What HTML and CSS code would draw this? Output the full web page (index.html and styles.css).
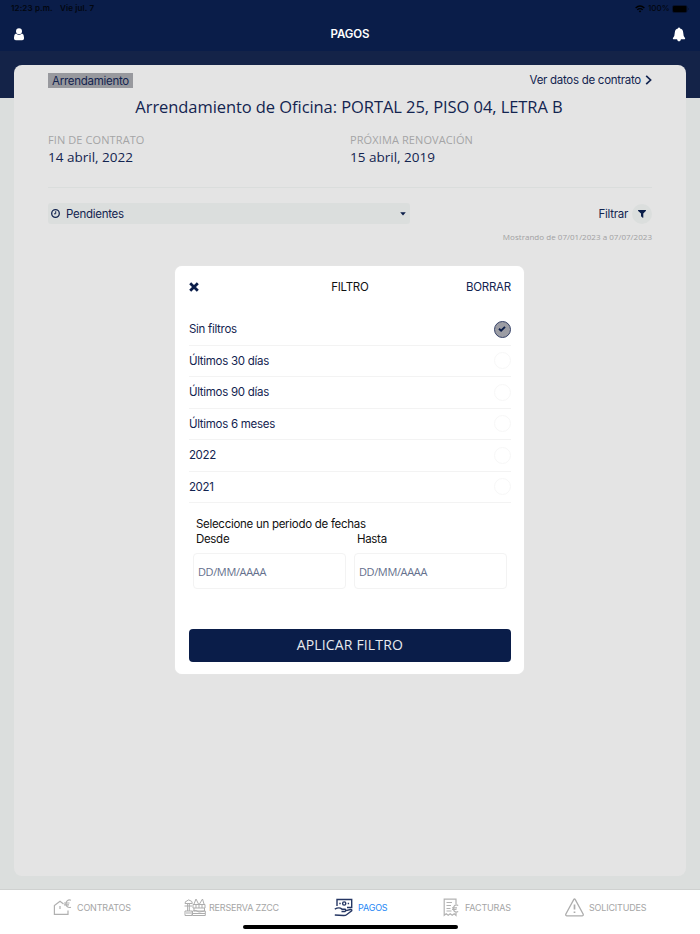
FILE: index.html
```html
<!DOCTYPE html>
<html lang="es">
<head>
    <meta charset="UTF-8">
    <meta name="viewport" content="width=device-width, initial-scale=1.0">
    <title>Pagos</title>
    <link rel="stylesheet" href="styles.css">
</head>
<body>
    <header>
        <div class="status">
            <span class="time">12:23 p.m.</span>
            <span class="date">Vie jul. 7</span>
            <svg class="wifi" width="10" height="8" viewBox="0 0 10 8" fill="none" stroke="#000" stroke-width="1.3">
                <path d="M.6 3Q5-1 9.400 3M2.300 4.800Q5 2.400 7.700 4.800"/>
                <path d="M3.700 6 5 7.500 6.300 6Q5 5 3.700 6Z" fill="#000" stroke="none"/>
            </svg>
            <span class="percent">100%</span>
            <svg width="17" height="8" viewBox="0 0 17 8">
                <rect x=".5" y=".5" width="14.500" height="7" rx="1.800" fill="none" stroke="#07122e"/>
                <rect x="1" y="1" width="13.500" height="6" rx="1"/>
                <path d="M16 3q1 1 0 2z"/>
            </svg>
        </div>
        <nav class="topbar">
            <svg width="10" height="13" viewBox="0 0 10 13" fill="#fff">
                <circle cx="5" cy="3.200" r="3"/>
                <path d="M2 5.600Q5 8.300 8 5.600 10 6.300 10 9.500V10.500Q10 12.200 8.200 12.200H1.800Q0 12.200 0 10.500V9.500Q0 6.300 2 5.600Z"/>
            </svg>
            <h1>PAGOS</h1>
            <svg width="14" height="15" viewBox="0 0 14 15" fill="#fff">
                <path d="M7 .5Q8 .5 8.100 1.500 11 2.200 11.200 5.500 11.300 9.500 13 11 13.500 11.700 12.700 12.200H1.300Q.5 11.700 1 11 2.700 9.500 2.800 5.500 3 2.200 5.900 1.500 6 .5 7 .5Z"/>
                <path d="M5 12H9Q8.700 14.400 7 14.400 5.300 14.400 5 12Z"/>
            </svg>
        </nav>
    </header>

    <main>
        <section class="card">
            <div class="card-top">
                <span class="tag">Arrendamiento</span>
                <a class="details" href="#">Ver datos de contrato
                    <svg width="7" height="10" viewBox="0 0 7 10" fill="none" stroke="#132450" stroke-width="1.700"><path d="M1.200 .8 5.600 5 1.200 9.200"/></svg>
                </a>
            </div>
            <h2>Arrendamiento de Oficina: PORTAL 25, PISO 04, LETRA B</h2>
            <div class="dates">
                <div>
                    <p class="label">FIN DE CONTRATO</p>
                    <p class="value">14 abril, 2022</p>
                </div>
                <div>
                    <p class="label">PRÓXIMA RENOVACIÓN</p>
                    <p class="value">15 abril, 2019</p>
                </div>
            </div>
            <div class="toolbar">
                <div class="select">
                    <svg width="9" height="9" viewBox="0 0 9 9" fill="none" stroke="#132450"><circle cx="4.500" cy="4.500" r="3.800" stroke-width="1.300"/><path d="M4.700 2.200V4.800H3"/></svg>
                    <span>Pendientes</span>
                    <svg class="caret" width="6" height="4" viewBox="0 0 6 4" fill="#0a1d49"><path d="M.2 .3H5.800L3 3.400Z"/></svg>
                </div>
                <span class="filter-text">Filtrar</span>
                <span class="filter-icon">
                    <svg width="8" height="8" viewBox="0 0 8 8" fill="#0a1d49"><path d="M.2 0H7.800Q8.200.5 7.800.9L5.300 3.600V7.600Q5.100 8 4.700 7.800L3 6.300V3.600L.2.900Q-.2.500.2 0Z"/></svg>
                </span>
            </div>
            <p class="showing">Mostrando de 07/01/2023 a 07/07/2023</p>
        </section>
    </main>

    <div class="modal">
        <div class="modal-header">
            <svg width="10" height="10" viewBox="0 0 10 10" stroke="#0a1d49" stroke-width="2.800"><path d="M1.200 1.200 8.800 8.800M8.800 1.200 1.200 8.800"/></svg>
            <h3>FILTRO</h3>
            <a href="#">BORRAR</a>
        </div>
        <ul class="options">
            <li>Sin filtros
                <span class="radio checked"><svg width="8" height="6" viewBox="0 0 8 6" fill="none" stroke="#0a1d49" stroke-width="1.900"><path d="M1 2.700 3.100 4.600 7 .9"/></svg></span>
            </li>
            <li>Últimos 30 días <span class="radio"></span></li>
            <li>Últimos 90 días <span class="radio"></span></li>
            <li>Últimos 6 meses <span class="radio"></span></li>
            <li>2022 <span class="radio"></span></li>
            <li>2021 <span class="radio"></span></li>
        </ul>
        <form>
            <p class="period">Seleccione un periodo de fechas</p>
            <div class="range">
                <div>
                    <label for="desde">Desde</label>
                    <input type="text" id="desde" placeholder="DD/MM/AAAA">
                </div>
                <div>
                    <label for="hasta">Hasta</label>
                    <input type="text" id="hasta" placeholder="DD/MM/AAAA">
                </div>
            </div>
            <button type="button">APLICAR FILTRO</button>
        </form>
    </div>

    <footer>
        <ul class="tabs">
            <li class="contratos">
                <svg width="19" height="17" viewBox="0 0 19 17" fill="none" stroke="#b0b0b0" stroke-width="1.200">
                    <path d="M10.500 5 7 2.300 1.400 6.500V15.300H15V11.500M7 7V10"/>
                    <path d="M18 1.200C15 .2 13 2.200 13 4.800S15 9.200 18 8.200M11 4H16.500M11 5.900H16"/>
                </svg>
                <span>CONTRATOS</span>
            </li>
            <li class="reserva">
                <svg width="22" height="19" viewBox="0 0 22 19" fill="none" stroke="#adadad" stroke-width="1">
                    <path d="M1 5.500Q1 3 3 3 4 1 6 2.500 8.500 3 8.300 5.500H1ZM3.600 5.500V13M5.300 5.500V13M.5 8H8M1 13H8V17.500H1ZM2 15H7"/>
                    <path d="M10 6 12 1 14.500 6M15.500 6 18.500 1 20 6M9 6.500H21V10H9ZM10 10V13H20.500V10M8.500 13Q12 11.500 15 14L21.300 13V17.500H8.500ZM9 15.500H21M12 7V10M15 7V10M18 7V10"/>
                </svg>
                <span>RERSERVA ZZCC</span>
            </li>
            <li class="pagos">
                <svg width="19" height="19" viewBox="0 0 19 19" fill="none" stroke="#253663" stroke-width="1.400">
                    <path d="M3 8V1.500H17.700V9.500H13"/>
                    <circle cx="10.200" cy="5.500" r="1.600"/>
                    <path d="M5.300 5.500H6.700M13.700 5.500H15.100"/>
                    <path d="M.8 11.200Q4 9.300 6.500 10.200L8 11.200H11Q12.600 12.300 11 13.500H7.500M12.300 12.700 16.300 11.500Q18.300 11.500 17.700 12.800L12.500 16.800Q11.500 17.600 9.500 17.500L.8 17"/>
                </svg>
                <span>PAGOS</span>
            </li>
            <li class="facturas">
                <svg width="16" height="19" viewBox="0 0 16 19" fill="none" stroke="#b3b3b3" stroke-width="1.200">
                    <path d="M13 6V1.200H1.200V17.300L3.200 15.700 5.200 17.300 7.200 15.700 9.200 17.300 11.200 15.700 13 17.300V14.500"/>
                    <path d="M3.500 4.500H9M3.500 7.500H8M3.500 10.500H7.500M3.500 13H8.500M15.200 7.500C12 6 10.500 8 10.500 10.500S12 15 15.200 13.500M9 9.800H14M9 11.500H13.500"/>
                </svg>
                <span>FACTURAS</span>
            </li>
            <li class="solicitudes">
                <svg width="19" height="19" viewBox="0 0 19 19" fill="none" stroke="#adadad" stroke-width="1.300">
                    <path d="M8.700 1.600Q9.500.4 10.300 1.600L18.100 16Q18.700 17.700 17.300 17.800H1.700Q.3 17.700.9 16Z"/>
                    <path d="M9.500 6.500V11.500M9.500 13.500V15" stroke-width="1.700"/>
                </svg>
                <span>SOLICITUDES</span>
            </li>
        </ul>
        <div class="home-bar"></div>
    </footer>
</body>
</html>
```

FILE: styles.css
```css
* {
    box-sizing: border-box;
}
body {
    margin: 0;
    height: 934px;
    display: flex;
    flex-direction: column;
    position: relative;
    overflow: hidden;
    font-family: Inter, sans-serif;
    font-size: 11.5px;
    letter-spacing: -0.28px;
    color: #132450;
}
h1, h2, h3, p, ul {
    margin: 0;
    padding: 0;
    font-weight: normal;
}
ul {
    list-style-type: none;
}
a {
    color: inherit;
    text-decoration: none;
}
svg {
    display: block;
    flex-shrink: 0;
}
header {
    height: 51px;
    background-color: #0a1d49;
}
.status {
    height: 17px;
    display: flex;
    align-items: center;
    padding: 0 11px;
    color: #02060f;
    font-size: 8px;
    font-weight: 600;
    line-height: 17px;
    letter-spacing: 0.15px;
}
.time {
    width: 49px;
}
.wifi {
    margin-left: auto;
    margin-right: 3px;
}
.percent {
    width: 24px;
    font-weight: 500;
    letter-spacing: 0;
}
.topbar {
    height: 34px;
    display: flex;
    align-items: center;
    justify-content: space-between;
    padding: 0 14px;
    color: white;
}
.topbar h1 {
    font-size: 11.5px;
    font-weight: 600;
    letter-spacing: -0.1px;
    padding-left: 4px;
}
main {
    height: 838px;
    padding: 14px 14px 13px;
    background: linear-gradient(#142348 47.500px, #dbdedd 47.500px);
}
.card {
    height: 811px;
    padding: 7px 34px;
    border-radius: 8px;
    background-color: #e4e4e4;
}
.card-top {
    height: 16px;
    display: flex;
    align-items: center;
    justify-content: space-between;
}
.tag {
    width: 85px;
    height: 15px;
    line-height: 16px;
    text-align: center;
    white-space: nowrap;
    background-color: #98999e;
}
.details {
    display: flex;
    align-items: center;
    gap: 4px;
    line-height: 17px;
}
h2, .label, .value, .showing, input, button {
    font-family: "Open Sans", sans-serif;
    letter-spacing: 0;
}
h2 {
    height: 38px;
    margin-right: 2px;
    text-align: center;
    font-size: 16.5px;
    line-height: 38px;
    white-space: nowrap;
    letter-spacing: -0.07px;
}
.dates {
    height: 62px;
    display: grid;
    grid-template-columns: 1fr 1fr;
    padding-top: 6px;
    border-bottom: 1px solid #dadddc;
}
.label {
    height: 16px;
    font-size: 11px;
    line-height: 16px;
    letter-spacing: 0.1px;
    color: #a4a4a6;
}
.value {
    font-size: 13.5px;
    line-height: 18px;
}
.toolbar {
    display: flex;
    align-items: center;
    margin-top: 15px;
    height: 21px;
}
.select {
    width: 362px;
    height: 21px;
    display: flex;
    align-items: center;
    gap: 6px;
    padding: 0 4px 0 3px;
    border-radius: 3px;
    background-color: #dbdedd;
}
.select .caret {
    margin-left: auto;
}
.filter-text {
    margin-left: auto;
    margin-right: 4px;
}
.filter-icon {
    width: 20px;
    height: 20px;
    display: flex;
    align-items: center;
    justify-content: center;
    border-radius: 50%;
    background-color: #dbdedd;
}
.showing {
    margin-top: 7px;
    text-align: right;
    font-size: 8px;
    line-height: 12px;
    letter-spacing: 0.03px;
    color: #a0a0a2;
}
/* filter dialog over the card */
.modal {
    position: absolute;
    left: 175.4px;
    top: 265.6px;
    width: 349px;
    height: 408.6px;
    padding: 8px 13.5px;
    border-radius: 7px;
    background-color: white;
    box-shadow: 0 0 1px #f5f5f5;
}
.modal-header {
    height: 26px;
    display: grid;
    grid-template-columns: 1fr auto 1fr;
    align-items: center;
}
.modal-header h3 {
    font-size: 11.5px;
    color: #111;
}
.modal-header a {
    justify-self: end;
}
.options {
    margin-top: 14.5px;
}
.options li {
    height: 31.5px;
    display: flex;
    align-items: center;
    justify-content: space-between;
    border-bottom: 1px solid #f3f3f3;
}
.radio {
    width: 17px;
    height: 17px;
    border: 1px solid #f7f7f7;
    border-radius: 50%;
}
.radio.checked {
    display: flex;
    align-items: center;
    justify-content: center;
    border-color: #354268;
    background-color: #9c9da4;
}
form {
    padding-top: 14.3px;
}
.period {
    padding-left: 7px;
    line-height: 15px;
    color: #111;
}
.range {
    display: flex;
    gap: 8px;
    padding-left: 4px;
}
.range label {
    display: block;
    height: 21px;
    padding-left: 3px;
    line-height: 15px;
    color: #111;
}
.range input {
    display: block;
    width: 153px;
    height: 36px;
    padding: 0 4px;
    border: 1px solid #f3f3f3;
    border-radius: 4px;
    font-size: 11px;
    letter-spacing: -0.35px;
    outline: none;
}
.range input::placeholder {
    color: #65708d;
}
button {
    display: block;
    width: 322px;
    height: 33px;
    margin-top: 39.5px;
    padding: 0 0 2px;
    border: none;
    border-radius: 4px;
    background-color: #0a1d49;
    color: #e8eaef;
    font-size: 14px;
    letter-spacing: 0.15px;
}
footer {
    height: 45px;
    border-top: 1px solid #cfd1d0;
    background-color: white;
}
.tabs {
    height: 34px;
    display: grid;
    grid-template-columns: 161px 135px 126px 114px 164px;
    font-size: 9px;
    letter-spacing: -0.18px;
    color: #a5a5a5;
}
.tabs li {
    display: flex;
    align-items: center;
    gap: 5px;
    white-space: nowrap;
}
.contratos {
    padding-left: 53px;
}
.reserva {
    padding-left: 23px;
}
.reserva span {
    margin-left: -2px;
}
.tabs .pagos {
    padding-left: 38px;
    color: #2386f5;
}
.facturas {
    padding-left: 21px;
}
.facturas span {
    margin-left: 1px;
}
.solicitudes {
    padding-left: 29px;
}
.home-bar {
    width: 215px;
    height: 4px;
    margin: 1px auto 0;
    border-radius: 2px;
    background-color: black;
}
```
